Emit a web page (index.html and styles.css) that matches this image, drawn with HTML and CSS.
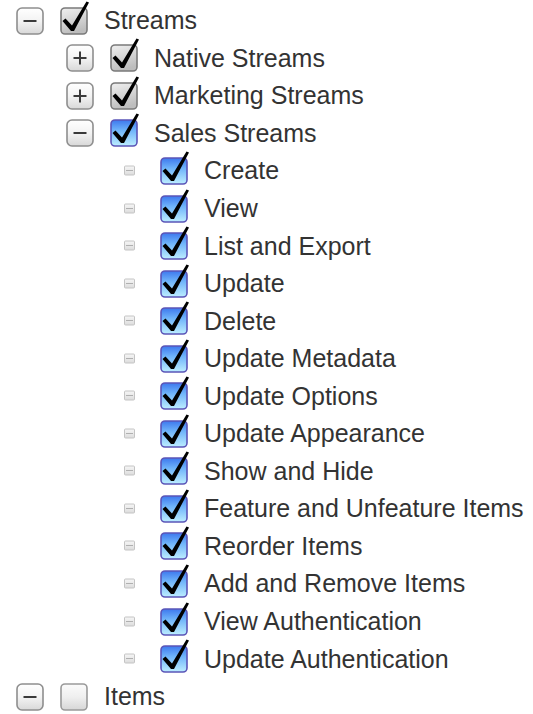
FILE: index.html
```
<!DOCTYPE html>
<html>
<head>
<meta charset="utf-8">
<link rel="stylesheet" href="styles.css">
</head>
<body>
<svg class="defs" width="0" height="0">
  <defs>
    <linearGradient id="gExp" x1="0" y1="0" x2="0" y2="1">
      <stop offset="0" stop-color="#ffffff"/>
      <stop offset="0.5" stop-color="#f3f3f3"/>
      <stop offset="1" stop-color="#d8d8d8"/>
    </linearGradient>
    <linearGradient id="gGray" x1="0" y1="0" x2="0.3" y2="1">
      <stop offset="0" stop-color="#f0f0f0"/>
      <stop offset="0.45" stop-color="#dadada"/>
      <stop offset="1" stop-color="#bdbdbd"/>
    </linearGradient>
    <linearGradient id="gBlue" x1="0" y1="0" x2="0" y2="1">
      <stop offset="0" stop-color="#3d78ee"/>
      <stop offset="0.4" stop-color="#6fb4fa"/>
      <stop offset="1" stop-color="#bdeeff"/>
    </linearGradient>
    <linearGradient id="gEmpty" x1="0" y1="0" x2="0" y2="1">
      <stop offset="0" stop-color="#fbfbfb"/>
      <stop offset="0.5" stop-color="#efefef"/>
      <stop offset="1" stop-color="#d6d6d6"/>
    </linearGradient>
    <linearGradient id="gLeaf" x1="0" y1="0" x2="0" y2="1">
      <stop offset="0" stop-color="#f6f6f6"/>
      <stop offset="1" stop-color="#dcdcdc"/>
    </linearGradient>
    <symbol id="expMinus" viewBox="0 0 28 28" overflow="visible">
      <rect x="1" y="1" width="26" height="26" rx="5" fill="url(#gExp)" stroke="#8e8e8e" stroke-width="1.6"/>
      <line x1="7.5" y1="14" x2="20.5" y2="14" stroke="#3a3a3a" stroke-width="2"/>
    </symbol>
    <symbol id="expPlus" viewBox="0 0 28 28" overflow="visible">
      <rect x="1" y="1" width="26" height="26" rx="5" fill="url(#gExp)" stroke="#8e8e8e" stroke-width="1.6"/>
      <line x1="7.5" y1="14" x2="20.5" y2="14" stroke="#3a3a3a" stroke-width="2"/>
      <line x1="14" y1="7.5" x2="14" y2="20.5" stroke="#3a3a3a" stroke-width="2"/>
    </symbol>
    <symbol id="tick" viewBox="0 0 28 28" overflow="visible">
      <polygon points="2.5,14 5.5,11.5 12,18.5 26.5,-5.5 29,-4.5 14,24 11,24" fill="#000"/>
    </symbol>
  </defs>
</svg>

<ul class="tree">
  <li>
    <div class="row">
      <svg class="exp" width="28" height="28"><use href="#expMinus"/></svg>
      <svg class="cb" width="28" height="28"><rect x="1" y="1" width="26" height="26" rx="4" fill="url(#gGray)" stroke="#7a7a7a" stroke-width="1.6"/><use href="#tick" width="28" height="28"/></svg>
      <span class="label">Streams</span>
    </div>
    <ul>
      <li>
        <div class="row">
          <svg class="exp" width="28" height="28"><use href="#expPlus"/></svg>
          <svg class="cb" width="28" height="28"><rect x="1" y="1" width="26" height="26" rx="4" fill="url(#gGray)" stroke="#7a7a7a" stroke-width="1.6"/><use href="#tick" width="28" height="28"/></svg>
          <span class="label">Native Streams</span>
        </div>
      </li>
      <li>
        <div class="row">
          <svg class="exp" width="28" height="28"><use href="#expPlus"/></svg>
          <svg class="cb" width="28" height="28"><rect x="1" y="1" width="26" height="26" rx="4" fill="url(#gGray)" stroke="#7a7a7a" stroke-width="1.6"/><use href="#tick" width="28" height="28"/></svg>
          <span class="label">Marketing Streams</span>
        </div>
      </li>
      <li>
        <div class="row">
          <svg class="exp" width="28" height="28"><use href="#expMinus"/></svg>
          <svg class="cb" width="28" height="28"><rect x="1" y="1" width="26" height="26" rx="4" fill="url(#gBlue)" stroke="#5b55b8" stroke-width="1.6"/><use href="#tick" width="28" height="28"/></svg>
          <span class="label">Sales Streams</span>
        </div>
        <ul id="leaves"></ul>
      </li>
    </ul>
  </li>
  <li>
    <div class="row">
      <svg class="exp" width="28" height="28"><use href="#expMinus"/></svg>
      <svg class="cb" width="28" height="28"><rect x="1" y="1" width="26" height="26" rx="4" fill="url(#gEmpty)" stroke="#9a9a9a" stroke-width="1.6"/></svg>
      <span class="label">Items</span>
    </div>
  </li>
</ul>
<script src="script.js"></script>
</body>
</html>
```
FILE: script.js
```
var items = ["Create","View","List and Export","Update","Delete","Update Metadata","Update Options","Update Appearance","Show and Hide","Feature and Unfeature Items","Reorder Items","Add and Remove Items","View Authentication","Update Authentication"];
var ul = document.getElementById("leaves");
var html = "";
items.forEach(function (t) {
  html += '<li><div class="row">' +
    '<svg class="exp leaf" width="28" height="28"><rect x="8.5" y="9" width="10" height="9" rx="1" fill="url(#gLeaf)" stroke="#c4c4c4" stroke-width="1"/><line x1="10" y1="13.5" x2="17" y2="13.5" stroke="#b0b0b0" stroke-width="1"/></svg>' +
    '<svg class="cb" width="28" height="28"><rect x="1" y="1" width="26" height="26" rx="4" fill="url(#gBlue)" stroke="#5b55b8" stroke-width="1.6"/><use href="#tick" width="28" height="28"/></svg>' +
    '<span class="label">' + t + '</span></div></li>';
});
ul.innerHTML = html;
```
FILE: styles.css
```
html, body {
  margin: 0;
  padding: 0;
  background: #ffffff;
}
body {
  padding-top: 2px;
  font-family: "Liberation Sans", Arial, sans-serif;
  color: #333333;
}
.defs {
  display: block;
  width: 0;
  height: 0;
  overflow: hidden;
}
ul {
  list-style: none;
  margin: 0;
  padding: 0 0 0 50px;
}
ul.tree {
  padding-left: 16px;
}
.row {
  display: flex;
  align-items: center;
  height: 37.55px;
}
.exp {
  flex: none;
  width: 28px;
  height: 28px;
  margin-right: 16px;
  overflow: visible;
}
.cb {
  flex: none;
  width: 28px;
  height: 28px;
  margin-right: 16px;
  overflow: visible;
}
.label {
  font-size: 25px;
  line-height: 1;
  white-space: nowrap;
}
```
